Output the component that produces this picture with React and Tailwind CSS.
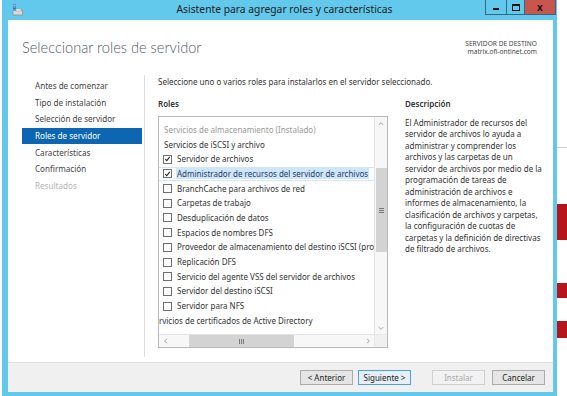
import React from 'react';

const navItems = [
  { label: 'Antes de comenzar' },
  { label: 'Tipo de instalación' },
  { label: 'Selección de servidor' },
  { label: 'Roles de servidor', active: true },
  { label: 'Características' },
  { label: 'Confirmación' },
  { label: 'Resultados', disabled: true },
];

const roles = [
  { label: 'Servicios de almacenamiento (Instalado)', kind: 'muted' },
  { label: 'Servicios de iSCSI y archivo', kind: 'group' },
  { label: 'Servidor de archivos', checked: true },
  { label: 'Administrador de recursos del servidor de archivos', checked: true, selected: true },
  { label: 'BranchCache para archivos de red' },
  { label: 'Carpetas de trabajo' },
  { label: 'Desduplicación de datos' },
  { label: 'Espacios de nombres DFS' },
  { label: 'Proveedor de almacenamiento del destino iSCSI (proveedores de hardware VDS y VSS)' },
  { label: 'Replicación DFS' },
  { label: 'Servicio del agente VSS del servidor de archivos' },
  { label: 'Servidor del destino iSCSI' },
  { label: 'Servidor para NFS' },
  { label: 'Servicios de certificados de Active Directory', kind: 'clipped' },
];

const description = [
  'El Administrador de recursos del',
  'servidor de archivos lo ayuda a',
  'administrar y comprender los',
  'archivos y las carpetas de un',
  'servidor de archivos por medio de la',
  'programación de tareas de',
  'administración de archivos e',
  'informes de almacenamiento, la',
  'clasificación de archivos y carpetas,',
  'la configuración de cuotas de',
  'carpetas y la definición de directivas',
  'de filtrado de archivos.',
];

function CheckBox({ checked }) {
  return (
    <span className="flex h-[9px] w-[9px] shrink-0 items-center justify-center border border-[#707070] bg-white">
      {checked ? (
        <svg viewBox="0 0 9 9" className="h-[8px] w-[8px]">
          <path d="M1.6 4.6 L3.6 6.6 L7.4 1.8" fill="none" stroke="#222" strokeWidth="1.3" />
        </svg>
      ) : null}
    </span>
  );
}

function Arrow({ dir }) {
  const paths = {
    up: 'M2 5.5 L4.5 3 L7 5.5',
    down: 'M2 3.5 L4.5 6 L7 3.5',
    left: 'M5.5 2 L3 4.5 L5.5 7',
    right: 'M3.5 2 L6 4.5 L3.5 7',
  };
  return (
    <svg viewBox="0 0 9 9" className="h-[8px] w-[8px]">
      <path d={paths[dir]} fill="none" stroke="#8a8a8a" strokeWidth="0.9" />
    </svg>
  );
}

function RoleRow({ role }) {
  if (role.kind === 'muted') {
    return <div className="flex h-[14.7px] items-center pl-[5px] text-[#9a9a9a]">{role.label}</div>;
  }
  if (role.kind === 'group') {
    return <div className="flex h-[14.7px] items-center pl-[5px] text-[#333]">{role.label}</div>;
  }
  if (role.kind === 'clipped') {
    return <div className="-ml-[9px] flex h-[14.7px] items-center text-[#333]">{role.label}</div>;
  }
  return (
    <div className={`flex h-[14.7px] items-center gap-[5px] pl-[4px] ${role.selected ? 'border border-[#d6e5f3] -mx-[1px] pl-[3px]' : ''}`}>
      <CheckBox checked={role.checked} />
      <span className={role.selected ? 'bg-[#cfe5f8] px-[1px] -ml-[1px] leading-[11px] text-[#1f3d6b]' : 'text-[#333]'}>{role.label}</span>
    </div>
  );
}

function WizardButton({ children, primary, disabled }) {
  return (
    <button
      className={`flex h-[15px] w-[53px] items-center justify-center border text-[8px] ${
        primary
          ? 'border-[#4f9fe0] bg-[#e6eef7] text-[#222]'
          : disabled
          ? 'border-[#cfcfcf] bg-[#f2f2f2] text-[#a8a8a8]'
          : 'border-[#acacac] bg-[#e5e5e5] text-[#222]'
      }`}
    >
      {children}
    </button>
  );
}

export default function App() {
  return (
    <div className="flex h-[396px] w-[567px] overflow-hidden bg-white font-['Noto_Sans',sans-serif]">
      <div className="w-[2px] shrink-0 bg-white" />

      <div className="flex w-[555px] shrink-0 flex-col bg-[#62c8ec] pb-[4px] pl-[6px] pr-[4px]">
        <div className="-ml-[6px] -mr-[4px] flex h-[20px] shrink-0 items-start">
          <div className="flex h-[20px] w-[40px] items-center pl-[10px]">
            <svg viewBox="0 0 12 12" className="h-[12px] w-[12px]">
              <rect x="1" y="0.5" width="3" height="5" fill="#3a73b8" />
              <rect x="1.5" y="1.2" width="2" height="0.8" fill="#cfe3f5" />
              <rect x="1.5" y="2.6" width="2" height="0.8" fill="#cfe3f5" />
              <path d="M1 6.5 H10.5 V11 H1 Z" fill="#d9d9d9" stroke="#8a8a8a" strokeWidth="0.7" />
              <rect x="4" y="5" width="5" height="2" fill="#f2f2f2" stroke="#9a9a9a" strokeWidth="0.5" />
            </svg>
          </div>
          <div className="flex h-[20px] flex-1 items-center justify-center pl-[42px] text-[10.3px] text-[#1b1b1b]">
            Asistente para agregar roles y características
          </div>
          <div className="flex h-[15px] border border-t-0 border-[#2f6b85]">
            <div className="flex w-[21px] items-end justify-center border-r border-[#2f6b85] pb-[4px]">
              <span className="h-[2px] w-[6px] bg-[#111]" />
            </div>
            <div className="flex w-[18px] items-center justify-center border-r border-[#2f6b85]">
              <span className="h-[7px] w-[8px] border border-t-[2px] border-[#111]" />
            </div>
            <div className="flex w-[30px] items-center justify-center bg-[#c9554f] text-[10px] font-bold leading-none text-[#2a1414]">
              x
            </div>
          </div>
          <div className="w-[1px]" />
        </div>

        <div className="flex flex-1 flex-col bg-white">
          <div className="flex h-[55px] shrink-0 justify-between pl-[14px] pr-[16px]">
            <div className="pt-[18px] font-['Lato',sans-serif] text-[14.6px] font-light leading-[20px] text-[#4f5b66]">Seleccionar roles de servidor</div>
            <div className="flex flex-col items-end pt-[20px] text-[6.6px] leading-[8px] text-[#444]">
              <div>SERVIDOR DE DESTINO</div>
              <div>matrix.ofi-ontinet.com</div>
            </div>
          </div>

          <div className="flex flex-1">
            <div className="mb-[5px] flex w-[137px] shrink-0 flex-col border-r border-[#dcdcdc] pl-[14px] pr-[2px] pt-[2.7px]">
              {navItems.map((item) => (
                <div
                  key={item.label}
                  className={`flex h-[16.67px] items-center pl-[13px] text-[8.1px] ${
                    item.active ? 'bg-[#0d66b1] text-white' : item.disabled ? 'text-[#b5b5b5]' : 'text-[#444]'
                  }`}
                >
                  {item.label}
                </div>
              ))}
            </div>

            <div className="flex flex-1 flex-col pl-[13px] pt-[1px] text-[8px] text-[#333]">
              <div className="h-[12px] leading-[12px]">Seleccione uno o varios roles para instalarlos en el servidor seleccionado.</div>
              <div className="mt-[10px] flex">
                <div className="flex w-[230px] shrink-0 flex-col">
                  <div className="h-[12px] font-semibold leading-[12px]">Roles</div>
                  <div className="mt-[6px] flex h-[232px] flex-col border border-[#b9b9b9] bg-white">
                    <div className="flex min-h-0 flex-1">
                      <div className="min-w-0 flex-1 overflow-hidden whitespace-nowrap pt-[5.5px]">
                        {roles.map((role) => (
                          <RoleRow key={role.label} role={role} />
                        ))}
                      </div>
                      <div className="flex w-[13px] shrink-0 flex-col border-l border-[#e6e6e6] bg-[#f7f7f7]">
                        <div className="flex h-[13px] items-center justify-center"><Arrow dir="up" /></div>
                        <div className="flex-1">
                          <div className="ml-[1px] mt-[38px] flex h-[84px] w-[11px] items-center justify-center bg-[#d3d3d3]">
                            <div className="flex flex-col gap-[1px]">
                              <span className="h-[1px] w-[5px] bg-[#777]" />
                              <span className="h-[1px] w-[5px] bg-[#777]" />
                              <span className="h-[1px] w-[5px] bg-[#777]" />
                            </div>
                          </div>
                        </div>
                        <div className="flex h-[13px] items-center justify-center"><Arrow dir="down" /></div>
                      </div>
                    </div>
                    <div className="flex h-[13px] shrink-0 border-t border-[#e6e6e6] bg-[#f7f7f7]">
                      <div className="flex w-[13px] items-center justify-center"><Arrow dir="left" /></div>
                      <div className="flex-1">
                        <div className="ml-[17px] flex h-[12px] w-[105px] items-center justify-center bg-[#d3d3d3]">
                          <div className="flex gap-[1px]">
                            <span className="h-[5px] w-[1px] bg-[#777]" />
                            <span className="h-[5px] w-[1px] bg-[#777]" />
                            <span className="h-[5px] w-[1px] bg-[#777]" />
                          </div>
                        </div>
                      </div>
                      <div className="flex w-[13px] items-center justify-center"><Arrow dir="right" /></div>
                      <div className="w-[13px] border-l border-[#e6e6e6] bg-[#f0f0f0]" />
                    </div>
                  </div>
                </div>

                <div className="ml-[17px] flex flex-col">
                  <div className="h-[12px] font-semibold leading-[12px]">Descripción</div>
                  <div className="mt-[7px] leading-[11.45px]">
                    {description.map((line) => (
                      <div key={line} className="whitespace-nowrap">{line}</div>
                    ))}
                  </div>
                </div>
              </div>
            </div>
          </div>

          <div className="flex h-[30px] shrink-0 items-center justify-end border-t border-[#dfdfdf] bg-[#f0f0f0] pr-[8px]">
            <WizardButton>&lt; Anterior</WizardButton>
            <div className="w-[5px]" />
            <WizardButton primary>Siguiente &gt;</WizardButton>
            <div className="w-[21px]" />
            <WizardButton disabled>Instalar</WizardButton>
            <div className="w-[7px]" />
            <WizardButton>Cancelar</WizardButton>
          </div>
        </div>
      </div>

      <div className="flex flex-1 flex-col bg-white">
        <div className="h-[147px]" />
        <div className="h-[1px] bg-[#cfcfcf]" />
        <div className="h-[56px]" />
        <div className="h-[36px] bg-[#b8141c]" />
        <div className="h-[43px]" />
        <div className="h-[15px] bg-[#b8141c]" />
        <div className="h-[23px]" />
        <div className="h-[17px] bg-[#b8141c]" />
        <div className="flex-1" />
      </div>
    </div>
  );
}
